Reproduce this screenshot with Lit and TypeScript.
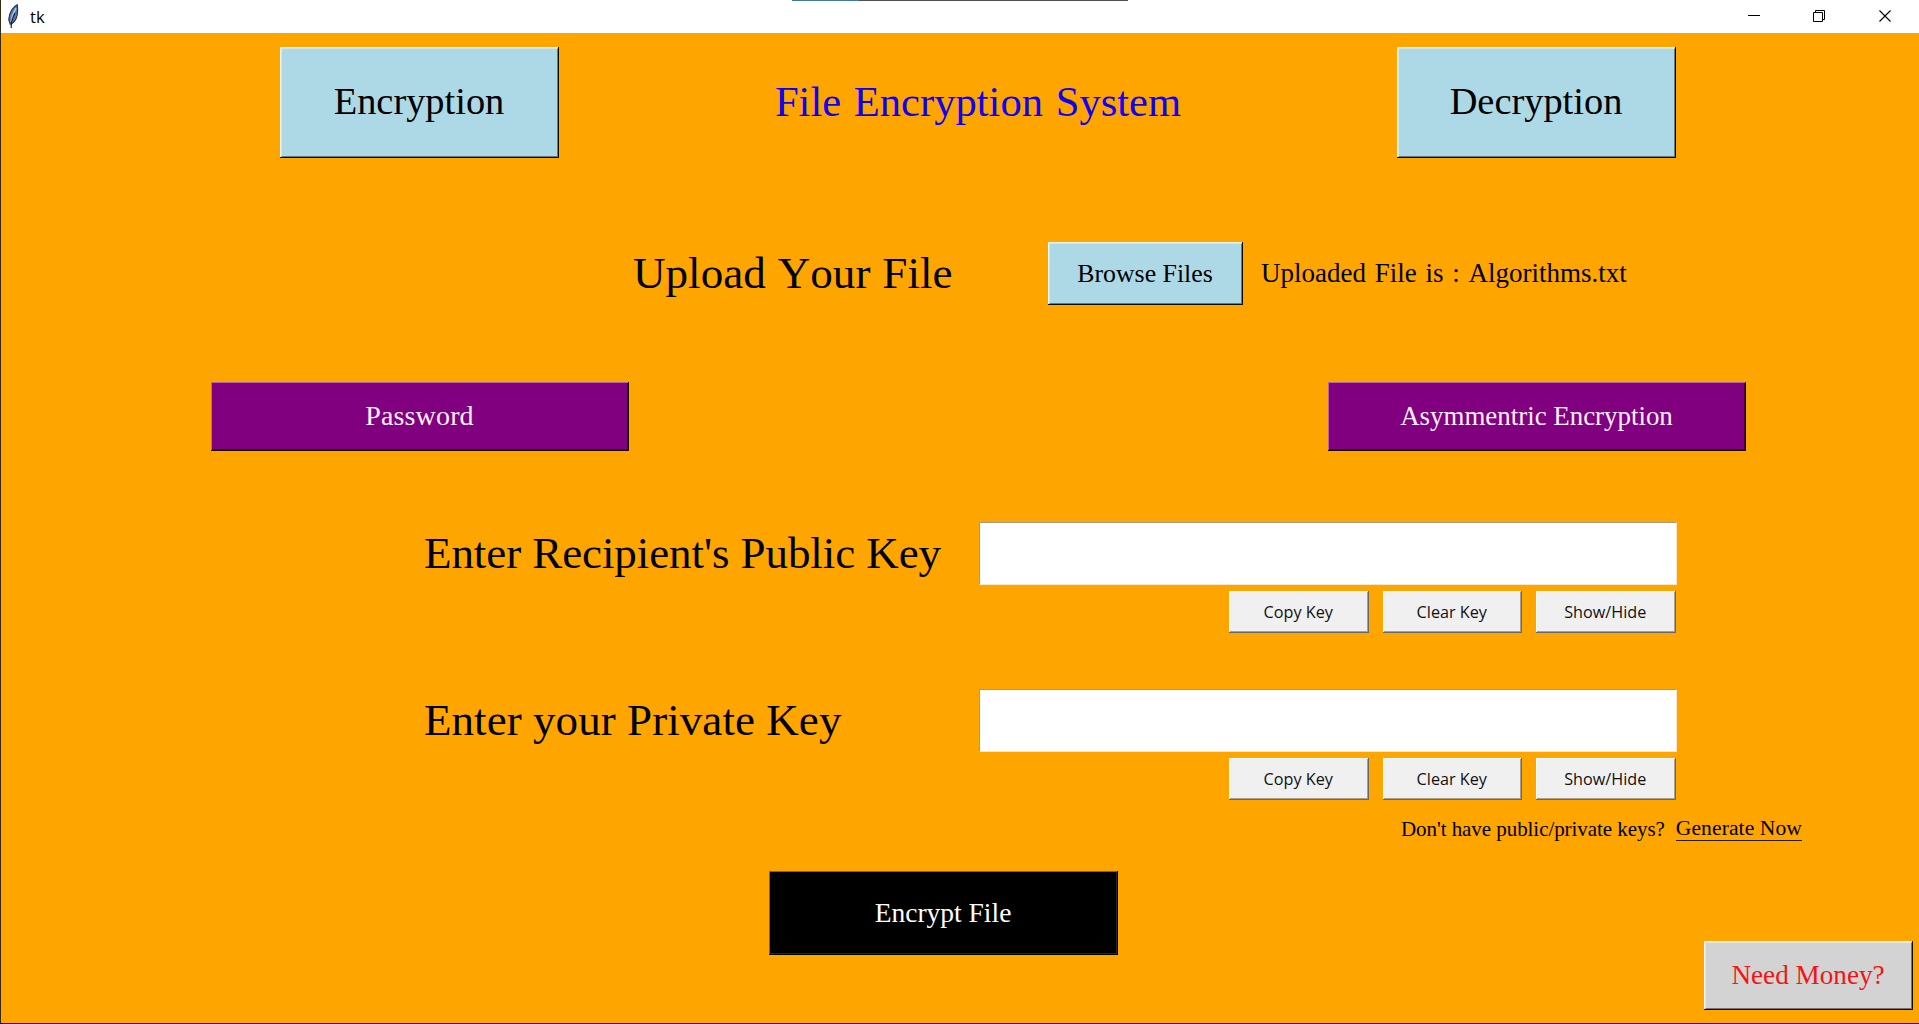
import { LitElement, html, css } from "lit";
import { customElement, property } from "lit/decorators.js";

@customElement("tk-button")
class TkButton extends LitElement {
  @property({ reflect: true }) tone = "plain";

  static styles = css`
    :host {
      display: block;
      flex: none;
      --face: #f0f0f0;
      --light: #fff;
      --shade: #a0a0a0;
      --edge: #696969;
    }
    :host([tone="blue"]) { --face: #add8e6; --light: #eef6ee; --shade: #5f7c86; --edge: #0c0c0c; }
    :host([tone="purple"]) { --face: #800080; --light: #b868a0; --shade: #3a0038; --edge: #180010; }
    :host([tone="black"]) { --face: #000; --light: #6d6654; --shade: #262626; --edge: #000; }
    :host([tone="grey"]) { --face: #d3d3d3; --light: #fbf7ec; --shade: #757575; --edge: #0c0c0c; }
    .face {
      box-sizing: border-box;
      width: 100%;
      height: 100%;
      margin: 0;
      padding: 0 1px var(--lift, 1px) 0;
      display: flex;
      align-items: center;
      justify-content: center;
      border: 0;
      border-radius: 0;
      background: var(--face);
      color: inherit;
      font: inherit;
      letter-spacing: inherit;
      font-kerning: none;
      white-space: pre;
      box-shadow: inset -1px -1px var(--edge), inset 1px 1px var(--light),
        inset -2px -2px var(--shade);
    }
    :host([tone="blue"]) .face, :host([tone="grey"]) .face {
      box-shadow: inset -1px -1px var(--edge), inset 1.5px 1.5px var(--light),
        inset -2px -2px var(--shade);
    }
  `;

  render() {
    return html`<button class="face"><slot></slot></button>`;
  }
}

@customElement("key-row")
class KeyRow extends LitElement {
  @property() label = "";

  static styles = css`
    :host { display: block; }
    .row { display: flex; align-items: center; height: 63px; }
    .label {
      width: 555px;
      font: 45px/60px "Liberation Serif", serif;
      font-kerning: none;
      white-space: pre;
      padding-bottom: 2px;
    }
    .label-long { letter-spacing: -0.08px; }
    .label-short { letter-spacing: 0.06px; }
    .entry {
      box-sizing: border-box;
      width: 698px;
      height: 63px;
      padding: 0 4px;
      border: 1px solid;
      border-color: #a09a8c #f3e6cc #f3e6cc #a09a8c;
      border-radius: 0;
      background: #fff;
      outline: none;
    }
    .tools {
      --lift: 0px;
      display: flex;
      gap: 14px;
      margin: 6px 0 0 805px;
      font: 16.2px/20px "Open Sans", sans-serif;
      color: #111;
    }
    .tool { width: 139.5px; height: 42px; }
  `;

  render() {
    return html`
      <div class="row">
        <span class="label ${this.label.length > 24 ? "label-long" : "label-short"}">${this.label}</span>
        <input class="entry" aria-label=${this.label} />
      </div>
      <div class="tools">
        ${["Copy Key", "Clear Key", "Show/Hide"].map(
          (t) => html`<tk-button class="tool">${t}</tk-button>`
        )}
      </div>
    `;
  }
}

@customElement("app-root")
class AppRoot extends LitElement {
  static styles = css`
    :host { display: block; }
    .window {
      box-sizing: border-box;
      width: 1919px;
      height: 1024px;
      overflow: hidden;
      position: relative;
      display: flex;
      flex-direction: column;
      border-left: 1px solid #3a2a14;
      border-bottom: 1px solid #1e0c04;
      background: #ffa500;
      color: #000;
      font-family: "Liberation Serif", serif;
      font-kerning: none;
      white-space: nowrap;
    }
    .strip {
      position: absolute;
      top: 0;
      left: 791px;
      display: flex;
      width: 336px;
      height: 1px;
      background: #505054;
    }
    .strip-active { width: 67px; background: #3f7b9d; }
    .titlebar {
      box-sizing: border-box;
      flex: none;
      height: 33px;
      padding: 0 27px 0 6px;
      display: flex;
      align-items: center;
      background: #fff;
    }
    .feather { width: 14px; height: 24px; margin: 0 9px 2px 0; }
    .caption { flex: 1; font: 16.5px/22px "Open Sans", sans-serif; }
    .controls { display: flex; gap: 53px; }
    .control { width: 13px; height: 13px; display: block; }
    .header {
      display: flex;
      justify-content: space-between;
      align-items: flex-start;
      margin: 14px 243px 0 279px;
      height: 112px;
    }
    .mode { --lift: 3px; width: 279px; height: 111px; font-size: 38.4px; line-height: 44px; }
    .heading {
      margin: 0;
      line-height: 110px;
      font-size: 42.6px;
      font-weight: 400;
      word-spacing: 2px;
      color: #0f00f0;
    }
    .upload { display: flex; align-items: center; height: 63px; margin: 83px 0 0 632px; }
    .upload-label { width: 415px; font-size: 45.1px; word-spacing: 0.7px; padding-bottom: 1px; }
    .browse { --lift: 0px; width: 195px; height: 63px; font-size: 25.8px; }
    .uploaded { margin-left: 18px; font-size: 27px; word-spacing: 2px; padding-bottom: 1px; }
    .methods {
      display: flex;
      justify-content: space-between;
      margin: 77px 173px 0 210px;
      color: #fff0ff;
    }
    .method { width: 418px; height: 69px; font-size: 26.9px; }
    .password { font-size: 28px; letter-spacing: 0.15px; }
    .keys { margin: 71px 0 0 423px; display: flex; flex-direction: column; gap: 56px; }
    .hint {
      display: flex;
      gap: 11px;
      margin: 15px 0 0 1400px;
      height: 56px;
      font-size: 21px;
      line-height: 28px;
      letter-spacing: -0.06px;
    }
    .generate {
      align-self: flex-start;
      line-height: 24px;
      margin-top: 1px;
      font-size: 21.6px;
      letter-spacing: 0.08px;
      border-bottom: 1px solid #2a1800;
    }
    .actions { display: flex; justify-content: space-between; height: 139px; margin: 0 6px 0 768px; }
    .encrypt { width: 349px; height: 84px; font-size: 27.5px; color: #fff; }
    .money { --lift: 0px; align-self: flex-end; width: 209px; height: 69px; font-size: 27.2px; color: #f51414; }
  `;

  render() {
    return html`
      <div class="window">
        <div class="strip"><span class="strip-active"></span></div>
        <div class="titlebar">
          <svg class="feather" viewBox="0 0 14 24">
            <path d="M10.2 .8C6.500 2.500 2 8 1.800 15.600L3.200 20l1.500-.2C9 17 11.400 10 10.200 .8z" fill="#5279b4" stroke="#273445" stroke-width="1.200" />
            <path d="M9 4C6.600 8 4.600 13 4.100 18" fill="none" stroke="#a9c6ec" stroke-width="1.500" />
            <path d="M8 9C6 13 4.300 17 4.200 22v2" fill="none" stroke="#1b2027" stroke-width="1.200" />
          </svg>
          <span class="caption">tk</span>
          <div class="controls">
            <svg class="control" viewBox="0 0 13 13"><path d="M1 5.500h12" stroke="#000" /></svg>
            <svg class="control" viewBox="0 0 13 13" fill="none" stroke="#000">
              <path d="M.5 2.500h9v9h-9zM2.500 2.500v-2h9v9h-2" />
            </svg>
            <svg class="control" viewBox="0 0 13 13"><path d="M.5 .5l11 11M11.500 .5l-11 11" stroke="#000" stroke-width="1.100" /></svg>
          </div>
        </div>

        <div class="header">
          <tk-button class="mode" tone="blue">Encryption</tk-button>
          <h1 class="heading">File Encryption System</h1>
          <tk-button class="mode" tone="blue">Decryption</tk-button>
        </div>

        <div class="upload">
          <span class="upload-label">Upload Your File</span>
          <tk-button class="browse" tone="blue">Browse Files</tk-button>
          <span class="uploaded">Uploaded File is : Algorithms.txt</span>
        </div>

        <div class="methods">
          <tk-button class="method password" tone="purple">Password</tk-button>
          <tk-button class="method" tone="purple">Asymmentric Encryption</tk-button>
        </div>

        <div class="keys">
          <key-row label="Enter Recipient's Public Key"></key-row>
          <key-row label="Enter your Private Key"></key-row>
        </div>

        <div class="hint">
          <span>Don't have public/private keys?</span>
          <span class="generate">Generate Now</span>
        </div>

        <div class="actions">
          <tk-button class="encrypt" tone="black">Encrypt File</tk-button>
          <tk-button class="money" tone="grey">Need Money?</tk-button>
        </div>
      </div>
    `;
  }
}
